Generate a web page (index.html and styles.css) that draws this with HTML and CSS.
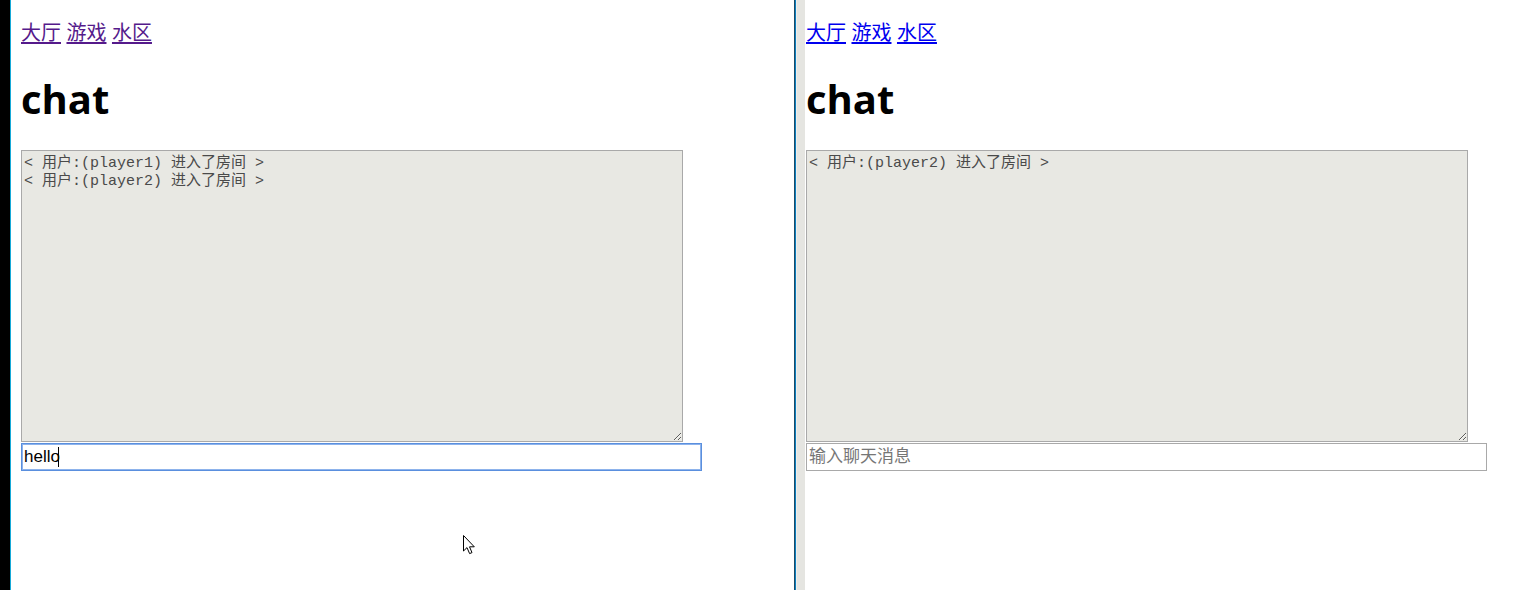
FILE: index.html
```html
<!DOCTYPE html>
<html lang="zh">
<head>
<meta charset="utf-8">
<title>chat</title>
<link rel="stylesheet" href="styles.css">
</head>
<body>
<div class="screen">
  <div class="edge-strip"></div>
  <section class="pane pane-left">
    <nav class="nav">
      <a class="link visited" href="#">大厅</a> <a class="link visited" href="#">游戏</a> <a class="link visited" href="#">水区</a>
    </nav>
    <h1 class="title">chat</h1>
    <textarea class="log" readonly>&lt; 用户:(player1) 进入了房间 &gt;
&lt; 用户:(player2) 进入了房间 &gt;</textarea>
    <div class="input-wrap">
      <input class="msg focused" type="text" value="hello" placeholder="输入聊天消息">
      <span class="caret"></span>
    </div>
    <svg class="pointer" width="14" height="22" viewBox="0 0 14 22">
      <path d="M1.5 1.5 L1.5 17 L5 13.6 L7.6 19.6 L10 18.6 L7.5 12.8 L12.3 12.8 Z" fill="#fff" stroke="#000" stroke-width="1" stroke-linejoin="miter"/>
    </svg>
  </section>
  <div class="divider"></div>
  <section class="pane pane-right">
    <nav class="nav">
      <a class="link" href="#">大厅</a> <a class="link" href="#">游戏</a> <a class="link" href="#">水区</a>
    </nav>
    <h1 class="title">chat</h1>
    <textarea class="log" readonly>&lt; 用户:(player2) 进入了房间 &gt;</textarea>
    <div class="input-wrap">
      <input class="msg" type="text" placeholder="输入聊天消息">
    </div>
  </section>
</div>
</body>
</html>
```
FILE: styles.css
```css
html, body {
  margin: 0;
  padding: 0;
  background: #ffffff;
  overflow: hidden;
}

.screen {
  display: flex;
  width: 1539px;
  height: 590px;
}

.edge-strip {
  width: 10px;
  flex: none;
  background: #000000;
  border-right: 1px solid #16a9d8;
}

.pane {
  position: relative;
  flex: none;
  box-sizing: border-box;
  padding-top: 20px;
  font-family: "Open Sans", "Noto Sans CJK SC", sans-serif;
}

.pane-left {
  width: 783px;
  padding-left: 10px;
  background: #ffffff;
}

.pane-right {
  flex: 1;
  padding-left: 1px;
  background: #ffffff;
}

.divider {
  width: 10px;
  flex: none;
  background: #e5e5e1;
  border-left: 1px solid #1c4a66;
  box-shadow: inset 1px 0 0 #0b7fbf, inset 2px 0 0 #eeeeec;
}

.nav {
  font-family: "Noto Sans CJK SC", "Microsoft YaHei", sans-serif;
  font-size: 20px;
  line-height: 24px;
  height: 24px;
  word-spacing: 1px;
  white-space: nowrap;
}

.link {
  color: #0000ee;
  text-decoration: underline;
  text-underline-offset: 2px;
}

.link.visited {
  color: #551a8b;
}

.title {
  margin: 31px 0 27px;
  font-family: "Open Sans", sans-serif;
  font-weight: 700;
  font-size: 40px;
  line-height: 48px;
  height: 48px;
  color: #000000;
}

.log {
  display: block;
  box-sizing: border-box;
  width: 662px;
  height: 292px;
  margin: 0;
  padding: 4px 2px 2px;
  border: 1px solid #a9a9a9;
  background: #e8e8e3;
  color: #4a4a4a;
  font-family: "Liberation Mono", "Noto Sans CJK SC", monospace;
  font-size: 15px;
  line-height: 18px;
  resize: both;
  outline: none;
}

.input-wrap {
  position: relative;
  margin-top: 1px;
  width: 681px;
}

.msg {
  display: block;
  box-sizing: border-box;
  width: 681px;
  height: 28px;
  margin: 0;
  padding: 0 2px;
  border: 1px solid #a9a9a9;
  background: #ffffff;
  color: #000000;
  font-family: "Liberation Sans", "Noto Sans CJK SC", sans-serif;
  font-size: 17px;
  outline: none;
}

.msg::placeholder {
  color: #767676;
  font-family: "Noto Sans CJK SC", sans-serif;
}

.msg.focused {
  border-color: #5a8fde;
  box-shadow: inset 0 0 0 1px #8db3ec;
}

.caret {
  position: absolute;
  left: 37px;
  top: 4px;
  width: 1px;
  height: 20px;
  background: #000000;
}

.pointer {
  position: absolute;
  left: 451px;
  top: 534px;
}
```
